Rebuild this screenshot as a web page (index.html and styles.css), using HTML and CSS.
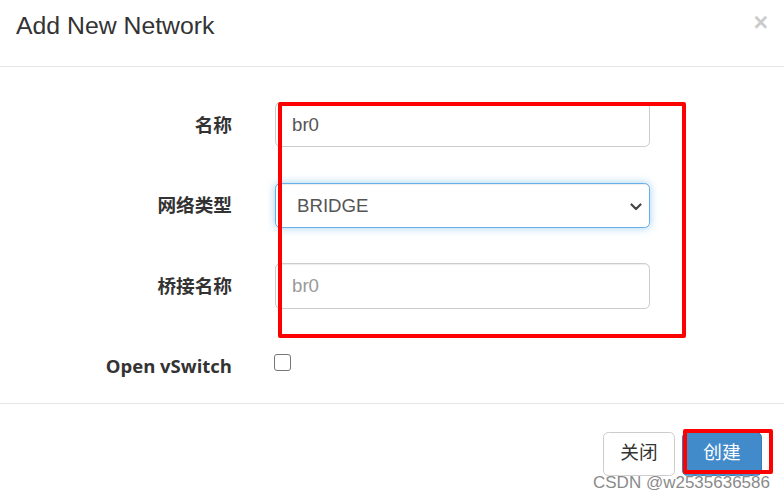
FILE: index.html
```html
<!DOCTYPE html>
<html lang="zh">
<head>
<meta charset="utf-8">
<title>Add New Network</title>
<link rel="stylesheet" href="styles.css">
</head>
<body>
<div class="modal">
  <div class="modal-header">
    <h4 class="modal-title">Add New Network</h4>
    <button class="close" type="button">×</button>
  </div>
  <div class="modal-body">
    <form class="form">
      <div class="form-row">
        <label class="form-label">名称</label>
        <input class="form-control" type="text" value="br0">
      </div>
      <div class="form-row">
        <label class="form-label">网络类型</label>
        <div class="select-wrap">
          <select class="form-control select focused">
            <option>BRIDGE</option>
          </select>
          <svg class="chevron" width="12" height="8" viewBox="0 0 12 8"><path d="M1.5 1.5 L6 6 L10.5 1.5" fill="none" stroke="#444" stroke-width="2.2" stroke-linecap="round" stroke-linejoin="round"/></svg>
        </div>
      </div>
      <div class="form-row">
        <label class="form-label">桥接名称</label>
        <input class="form-control" type="text" placeholder="br0">
      </div>
      <div class="check-row">
        <label class="form-label latin">Open vSwitch</label>
        <span class="checkbox"></span>
      </div>
    </form>
  </div>
  <div class="modal-footer">
    <button class="btn btn-default" type="button">关闭</button>
    <button class="btn btn-primary" type="button">创建</button>
  </div>
  <div class="mark mark-form"></div>
  <div class="mark mark-btn"></div>
  <div class="watermark">CSDN @w2535636586</div>
</div>
</body>
</html>
```

FILE: styles.css
```css
* { box-sizing: border-box; }
html, body { margin: 0; padding: 0; background: #fff; }
body {
  font-family: "Liberation Sans", Arial, "Noto Sans CJK SC", sans-serif;
  color: #333;
}
.modal {
  position: relative;
  width: 784px;
  height: 498px;
  overflow: hidden;
  background: #fff;
}
.modal-header {
  height: 67px;
  border-bottom: 1px solid #e5e5e5;
  display: flex;
  justify-content: space-between;
  align-items: flex-start;
  padding: 13px 16px 0 16px;
}
.modal-title {
  margin: 0;
  font-size: 24.8px;
  line-height: 26px;
  font-weight: normal;
  color: #333;
}
.close {
  border: 0;
  background: transparent;
  padding: 0;
  margin: -5px 0 0 0;
  font-family: "Liberation Sans", Arial, sans-serif;
  font-size: 25px;
  font-weight: bold;
  line-height: 28px;
  color: #000;
  opacity: 0.2;
}
.modal-body {
  padding-top: 35px;
  height: 336px;
}
.form-row {
  display: flex;
  align-items: center;
  height: 45.33px;
  margin-bottom: 35.33px;
}
.form-label {
  width: 232px;
  margin-right: 43px;
  padding-bottom: 3px;
  text-align: right;
  font-family: "Noto Sans CJK SC", sans-serif;
  font-weight: bold;
  font-size: 18.67px;
  color: #333;
}
.form-label.latin {
  font-family: "Open Sans", "Noto Sans CJK SC", sans-serif;
  font-size: 18.5px;
  line-height: 26px;
  padding-bottom: 0;
}
.form-control {
  width: 375px;
  height: 45.33px;
  padding: 8px 16px;
  font-family: "Liberation Sans", Arial, sans-serif;
  font-size: 18.67px;
  color: #555;
  background: #fff;
  border: 1px solid #ccc;
  border-radius: 5.33px;
  box-shadow: inset 0 1px 1px rgba(0,0,0,.075);
  outline: none;
}
.form-control::placeholder { color: #999; }
.select-wrap {
  position: relative;
  width: 375px;
  height: 45.33px;
}
.select {
  -webkit-appearance: none;
  appearance: none;
  padding-left: 21px;
}
.select.focused {
  border-color: #66afe9;
  box-shadow: inset 0 1px 1px rgba(0,0,0,.075), 0 0 8px rgba(102,175,233,.6);
}
.chevron {
  position: absolute;
  right: 8px;
  top: 20px;
}
.check-row {
  display: flex;
  align-items: flex-start;
  margin-top: 44px;
  height: 30px;
}
.checkbox {
  display: block;
  width: 17px;
  height: 17px;
  margin-top: 1px;
  margin-left: -1px;
  border: 1.5px solid #767676;
  border-radius: 3px;
  background: #fff;
}
.modal-footer {
  border-top: 1px solid #e5e5e5;
  display: flex;
  justify-content: flex-end;
  align-items: flex-start;
  padding: 28px 22px 0 0;
}
.btn {
  height: 43.5px;
  font-family: "Noto Sans CJK SC", sans-serif;
  font-size: 18.67px;
  line-height: 24px;
  border-radius: 5.33px;
  border: 1px solid transparent;
  padding: 5px 0 11px;
  text-align: center;
}
.btn-default {
  width: 72px;
  background: #fff;
  border-color: #ccc;
  color: #333;
}
.btn-primary {
  width: 80px;
  margin-left: 7px;
  background: #428bca;
  border-color: #357ebd;
  color: #fff;
}
.mark {
  position: absolute;
  border: 4px solid #ff0000;
  border-radius: 2px;
  pointer-events: none;
}
.mark-form {
  left: 278px;
  top: 102px;
  width: 408px;
  height: 236px;
}
.mark-btn {
  left: 683px;
  top: 429px;
  width: 90px;
  height: 45px;
}
.watermark {
  position: absolute;
  left: 593px;
  top: 473px;
  font-family: "Liberation Sans", Arial, sans-serif;
  font-size: 17px;
  line-height: 20px;
  color: #8a8a8a;
  text-shadow: 0 0 1px #fff, 0 0 2px #fff;
  white-space: nowrap;
}
```
